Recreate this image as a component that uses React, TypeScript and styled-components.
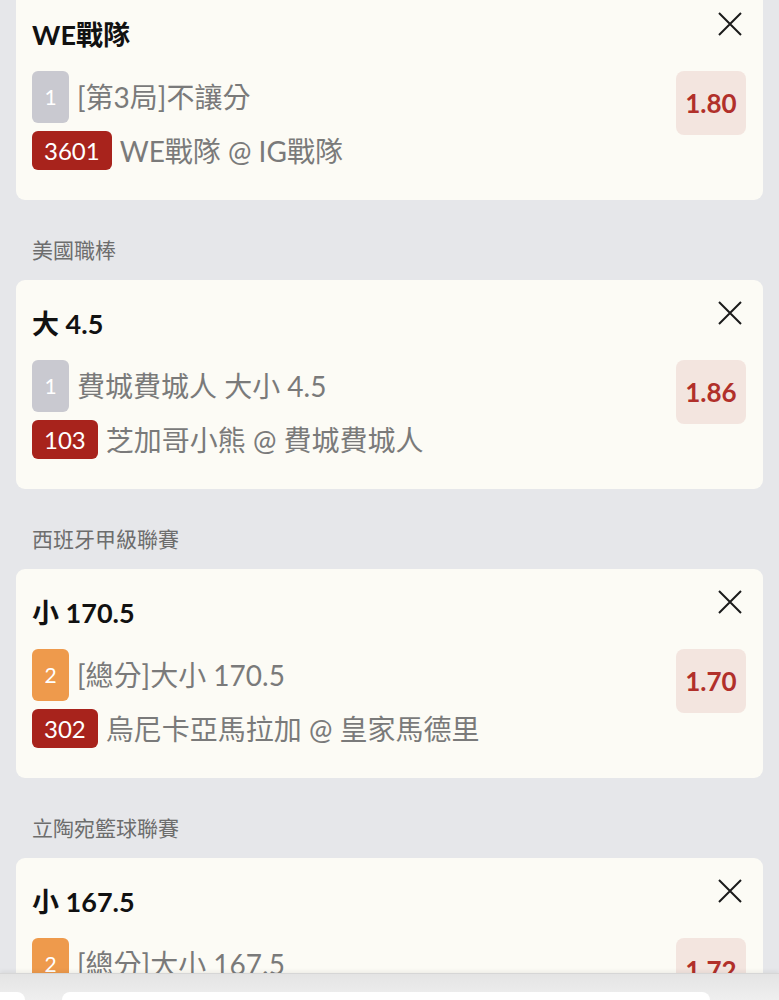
import styled, { createGlobalStyle } from 'styled-components';

const GlobalStyle = createGlobalStyle`
  html, body {
    margin: 0;
    padding: 0;
    background: #e6e7ea;
    font-family: Lato, "Noto Sans CJK TC", sans-serif;
    overflow: hidden;
  }
`;

type Bet = {
  league?: string;
  pick: string;
  order: number;
  market: string;
  code: string;
  match: string;
  odds: string;
};

const bets: Bet[] = [
  {
    pick: 'WE戰隊',
    order: 1,
    market: '[第3局]不讓分',
    code: '3601',
    match: 'WE戰隊 @ IG戰隊',
    odds: '1.80',
  },
  {
    league: '美國職棒',
    pick: '大 4.5',
    order: 1,
    market: '費城費城人 大小 4.5',
    code: '103',
    match: '芝加哥小熊 @ 費城費城人',
    odds: '1.86',
  },
  {
    league: '西班牙甲級聯賽',
    pick: '小 170.5',
    order: 2,
    market: '[總分]大小 170.5',
    code: '302',
    match: '烏尼卡亞馬拉加 @ 皇家馬德里',
    odds: '1.70',
  },
  {
    league: '立陶宛籃球聯賽',
    pick: '小 167.5',
    order: 2,
    market: '[總分]大小 167.5',
    code: '—',
    match: '',
    odds: '1.72',
  },
];

const Page = styled.div`
  margin-top: -9px;
  padding: 0 16px 40px;
`;

const LeagueLabel = styled.div`
  padding: 38px 16px 19px;
  font-size: 21px;
  line-height: 23px;
  color: #6d6d6d;
`;

const Card = styled.div`
  background: #fcfbf5;
  border-radius: 9px;
  padding: 28px 17px 30px 16px;
`;

const Header = styled.div`
  display: flex;
  justify-content: space-between;
  align-items: flex-start;
`;

const Pick = styled.div`
  font-size: 27px;
  font-weight: 700;
  line-height: 31px;
  color: #111;
`;

const CloseButton = styled.button`
  width: 24px;
  height: 24px;
  margin: -7px 4px 0 0;
  padding: 0;
  border: 0;
  background: none;
  display: flex;
`;

const Body = styled.div`
  display: flex;
  justify-content: space-between;
  align-items: flex-start;
  margin-top: 21px;
`;

const Lines = styled.div`
  display: flex;
  flex-direction: column;
  gap: 8px;
`;

const Line = styled.div`
  display: flex;
  align-items: center;
  gap: 8px;
  font-size: 28px;
  line-height: 36px;
  color: #7a7a7a;
  white-space: nowrap;
`;

const OrderBadge = styled.span<{ $order: number }>`
  width: 37px;
  height: 52px;
  border-radius: 6px;
  background: ${(p) => (p.$order === 2 ? '#ee9a4c' : '#c9c9d0')};
  color: #fff;
  font-size: 21px;
  display: flex;
  align-items: center;
  justify-content: center;
`;

const CodeBadge = styled.span`
  height: 39px;
  padding: 0 12px;
  border-radius: 6px;
  background: #a8231c;
  color: #fff;
  font-size: 24px;
  display: flex;
  align-items: center;
`;

const Odds = styled.div`
  width: 70px;
  height: 64px;
  border-radius: 8px;
  background: #f3e5df;
  color: #b1302a;
  font-size: 26px;
  font-weight: 700;
  display: flex;
  align-items: center;
  justify-content: center;
`;

const Footer = styled.div`
  position: fixed;
  left: 0;
  right: 0;
  bottom: 0;
  height: 26px;
  background: linear-gradient(#e4e4e4, #efefef);
  border-top: 1px solid #d6d6d6;
  box-shadow: 0 -2px 4px rgba(0, 0, 0, 0.06);
  display: flex;
  align-items: flex-end;
  gap: 37px;
  overflow: hidden;
`;

const FooterTab = styled.div`
  width: 25px;
  height: 8px;
  background: #fff;
  border-radius: 0 10px 0 0;
`;

const FooterInput = styled.div`
  width: 648px;
  height: 8px;
  background: #fff;
  border-radius: 12px 12px 0 0;
`;

const CloseIcon = () => (
  <svg width="24" height="24" viewBox="0 0 24 24">
    <path d="M1 1 L23 23 M23 1 L1 23" stroke="#1a1a1a" strokeWidth="2" fill="none" />
  </svg>
);

export default function App() {
  return (
    <>
      <GlobalStyle />
      <Page>
        {bets.map((bet) => (
          <div key={bet.pick}>
            {bet.league && <LeagueLabel>{bet.league}</LeagueLabel>}
            <Card>
              <Header>
                <Pick>{bet.pick}</Pick>
                <CloseButton>
                  <CloseIcon />
                </CloseButton>
              </Header>
              <Body>
                <Lines>
                  <Line>
                    <OrderBadge $order={bet.order}>{bet.order}</OrderBadge>
                    {bet.market}
                  </Line>
                  <Line>
                    <CodeBadge>{bet.code}</CodeBadge>
                    {bet.match}
                  </Line>
                </Lines>
                <Odds>{bet.odds}</Odds>
              </Body>
            </Card>
          </div>
        ))}
      </Page>
      <Footer>
        <FooterTab />
        <FooterInput />
      </Footer>
    </>
  );
}
